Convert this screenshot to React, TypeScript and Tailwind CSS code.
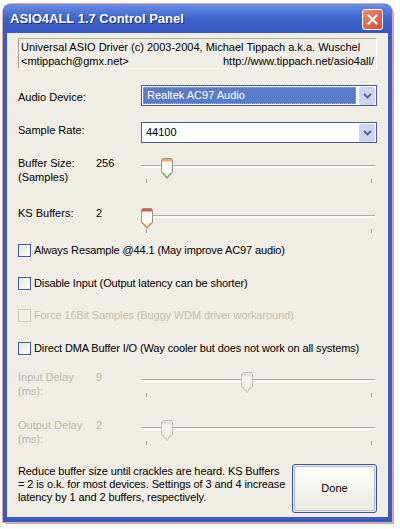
import React from "react";

const font = { fontFamily: '"Liberation Sans", Arial, sans-serif' };

const Thumb = ({ kind }: { kind: "green" | "red" | "off" }) => {
  const stroke = kind === "off" ? "#c4c1b6" : "#8c96a8";
  const top = kind === "red" ? "#e4573a" : kind === "green" ? "#f0a84a" : "#e2dfd6";
  const edge = kind === "off" ? "#d6d3c9" : kind === "red" ? "#e9913c" : "#7cb65a";
  return (
    <svg width="12" height="21" viewBox="0 0 12 21" className="block">
      <path d="M1.5 0.5 H10.5 L11.5 1.5 V14.5 L6 20.5 L0.5 14.5 V1.5 Z" fill={kind === "off" ? "#f4f2ec" : "#fbfbf8"} stroke={stroke} />
      <rect x="1" y="1" width="10" height="2.5" fill={top} />
      <path d="M1.5 14.5 L6 19.3 L10.5 14.5" fill="none" stroke={edge} strokeWidth="1.2" />
    </svg>
  );
};

const Slider = ({ pos, kind }: { pos: number; kind: "green" | "red" | "off" }) => (
  <div className="relative w-[236px] h-[30px]">
    <div className="absolute left-0 top-[9px] w-[234px] h-[3px] border-t border-t-[#aeaba2] bg-[#f7f6f2] border-b border-b-white" />
    <div className="absolute top-[23px] left-[5px] w-px h-[4px] bg-[#a4a197]" />
    <div className="absolute top-[23px] left-[230px] w-px h-[4px] bg-[#a4a197]" />
    <div className="absolute top-[2px]" style={{ left: pos }}>
      <Thumb kind={kind} />
    </div>
  </div>
);

const SliderRow = ({
  l1,
  l2,
  value,
  pos,
  kind,
  className,
}: {
  l1: string;
  l2?: string;
  value: string;
  pos: number;
  kind: "green" | "red" | "off";
  className: string;
}) => (
  <div className={`flex h-[30px] ${className}`}>
    <div className={`w-[78px] leading-[14px] ${kind === "off" ? "text-[#bcb8ab]" : "text-black"}`}>
      <div>{l1}</div>
      {l2 && <div>{l2}</div>}
    </div>
    <div className={`w-[45px] leading-[14px] ${kind === "off" ? "text-[#bcb8ab]" : "text-black"}`}>{value}</div>
    <Slider pos={pos} kind={kind} />
  </div>
);

const Check = ({ label, disabled, className }: { label: string; disabled?: boolean; className: string }) => (
  <div className={`flex items-center h-[14px] gap-[3px] ${className}`}>
    <div
      className={`w-[13px] h-[13px] border ${
        disabled ? "border-[#cfccc1] bg-[#f2f0ea]" : "border-[#3f5d9c] bg-gradient-to-br from-[#e6e4dc] to-white"
      }`}
    />
    <span className={`tracking-[-0.12px] ${disabled ? "text-[#c2beb1]" : "text-black"}`}>{label}</span>
  </div>
);

const Chevron = () => (
  <div className="w-[16px] h-[18px] bg-[#c9d6f4] rounded-[2px] flex items-center justify-center">
    <svg width="9" height="6" viewBox="0 0 9 6">
      <path d="M1 1 L4.5 4.5 L8 1" fill="none" stroke="#4d6188" strokeWidth="1.8" />
    </svg>
  </div>
);

const App = () => {
  return (
    <div className="w-[400px] h-[529px] bg-white pt-[4px] pl-[3px] text-[11px]" style={font}>
      <div className="w-[389px] h-[518px] rounded-t-[8px] bg-[#3a5bc2] flex flex-col shadow-[0_0_0_1px_#eba2a2,2px_2px_0_#b5b2ac]">
        <div className="h-[29px] rounded-t-[8px] bg-gradient-to-b from-[#6a8fe2] via-[#3e63cc] to-[#3658c2] flex items-center justify-between pl-[7px] pr-[9px] pt-[1px]">
          <div className="text-white font-bold text-[13px] [text-shadow:1px_1px_0_#1d2f78]">ASIO4ALL 1.7 Control Panel</div>
          <div className="w-[21px] h-[21px] rounded-[3px] border border-white bg-gradient-to-br from-[#ee8a72] to-[#d4482c] flex items-center justify-center">
            <svg width="11" height="11" viewBox="0 0 11 11">
              <path d="M1.5 1.5 L9.5 9.5 M9.5 1.5 L1.5 9.5" stroke="white" strokeWidth="2.2" strokeLinecap="round" />
            </svg>
          </div>
        </div>
        <div className="mx-[4px] h-[484px] bg-[#f0ede4] flex flex-col px-[11px]">
          <div className="mt-[5px] h-[31px] border border-t-[#aca899] border-l-[#aca899] border-b-white border-r-white px-[2px] pt-[1px] leading-[14px]">
            <div>Universal ASIO Driver (c) 2003-2004, Michael Tippach a.k.a. Wuschel</div>
            <div className="flex justify-between">
              <span>&lt;mtippach@gmx.net&gt;</span>
              <span>http://www.tippach.net/asio4all/</span>
            </div>
          </div>

          <div className="mt-[16px] flex h-[21px]">
            <div className="w-[123px] pt-[5px] leading-[14px]">Audio Device:</div>
            <div className="w-[236px] h-[21px] border border-[#4e5c8c] bg-white flex items-center pl-[1px] pr-[1px]">
              <div className="flex-1 h-[17px] bg-[#5a7cc8] text-white leading-[15px] pl-[3px] border border-dotted border-[#c8b060] mr-[3px]">Realtek AC97 Audio</div>
              <Chevron />
            </div>
          </div>

          <div className="mt-[16px] flex h-[21px]">
            <div className="w-[123px] pt-[1px] leading-[14px]">Sample Rate:</div>
            <div className="w-[236px] h-[21px] border border-[#4e5c8c] bg-white flex items-center pl-[4px] pr-[1px]">
              <div className="flex-1 leading-[15px]">44100</div>
              <Chevron />
            </div>
          </div>

          <SliderRow className="mt-[13px]" l1="Buffer Size:" l2="(Samples)" value="256" pos={20} kind="green" />
          <SliderRow className="mt-[20px]" l1="KS Buffers:" value="2" pos={0} kind="red" />

          <Check className="mt-[7px]" label="Always Resample @44.1 (May improve AC97 audio)" />
          <Check className="mt-[19px]" label="Disable Input (Output latency can be shorter)" />
          <Check className="mt-[18px]" label="Force 16Bit Samples (Buggy WDM driver workaround)" disabled />
          <Check className="mt-[19px]" label="Direct DMA Buffer I/O (Way cooler but does not work on all systems)" />

          <SliderRow className="mt-[15px]" l1="Input Delay" l2="(ms):" value="9" pos={100} kind="off" />
          <SliderRow className="mt-[18px]" l1="Output Delay" l2="(ms):" value="2" pos={20} kind="off" />

          <div className="mt-[16px] flex justify-between">
            <div className="leading-[13px] pt-[1px] tracking-[-0.1px]">
              Reduce buffer size until crackles are heard. KS Buffers
              <br />= 2 is o.k. for most devices. Settings of 3 and 4 increase
              <br />
              latency by 1 and 2 buffers, respectively.
            </div>
            <div className="w-[85px] h-[49px] rounded-[3px] border border-[#3c5190] p-px">
              <div className="w-full h-full rounded-[2px] border border-[#a9bdf0] bg-gradient-to-b from-white to-[#ebe9e0] flex items-center justify-center">
                Done
              </div>
            </div>
          </div>
        </div>
      </div>
    </div>
  );
};

export default App;
